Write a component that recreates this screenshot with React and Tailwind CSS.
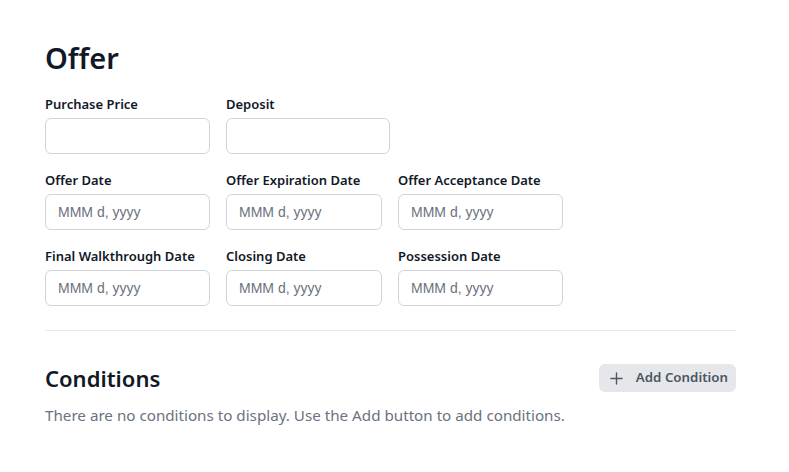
import { Plus } from "lucide-react";

const rows = [
  [
    { label: "Purchase Price", w: "w-[165px]" },
    { label: "Deposit", w: "w-[164px]" },
  ],
  [
    { label: "Offer Date", w: "w-[165px]", date: true },
    { label: "Offer Expiration Date", w: "w-[156px]", date: true },
    { label: "Offer Acceptance Date", w: "w-[165px]", date: true },
  ],
  [
    { label: "Final Walkthrough Date", w: "w-[165px]", date: true },
    { label: "Closing Date", w: "w-[156px]", date: true },
    { label: "Possession Date", w: "w-[165px]", date: true },
  ],
];

function Field({ label, w, date }) {
  return (
    <div className={`flex flex-col ${w}`}>
      <label className="text-[13px] leading-[18px] font-semibold text-[#111827]">{label}</label>
      <input
        type="text"
        placeholder={date ? "MMM d, yyyy" : ""}
        className="mt-[5px] h-[36px] w-full rounded-[6px] border border-[#d1d5db] bg-white px-[12px] font-['Liberation_Sans',Arial,sans-serif] text-[14px] text-[#111827] placeholder:text-[#6b7280] outline-none"
      />
    </div>
  );
}

export default function App() {
  return (
    <div
      className="min-h-[472px] bg-white px-[45px] pt-[38px] text-[#111827]"
      style={{ fontFamily: '"Noto Sans", "Open Sans", sans-serif' }}
    >
      <div className="w-[691px]">
        <h1 className="text-[29px] leading-[40px] font-semibold">Offer</h1>
        <div className="mt-[17px] flex flex-col gap-[17px]">
          {rows.map((row, i) => (
            <div key={i} className="flex gap-[16px]">
              {row.map((f) => (
                <Field key={f.label} {...f} />
              ))}
            </div>
          ))}
        </div>
        <div className="mt-[24px] border-t border-[#e5e7eb]" />
        <div className="mt-[32px] flex items-center justify-between">
          <h2 className="text-[22px] leading-[30px] font-semibold">Conditions</h2>
          <button className="flex h-[28px] items-center gap-[10px] rounded-[6px] bg-[#e5e7eb] pl-[8px] pr-[8px] text-[13.3px] font-semibold text-[#4b5563]">
            <Plus size={19} strokeWidth={1.75} />
            Add Condition
          </button>
        </div>
        <p className="mt-[11px] text-[15.2px] leading-[22px] text-[#6b7280]">
          There are no conditions to display. Use the Add button to add conditions.
        </p>
      </div>
    </div>
  );
}
